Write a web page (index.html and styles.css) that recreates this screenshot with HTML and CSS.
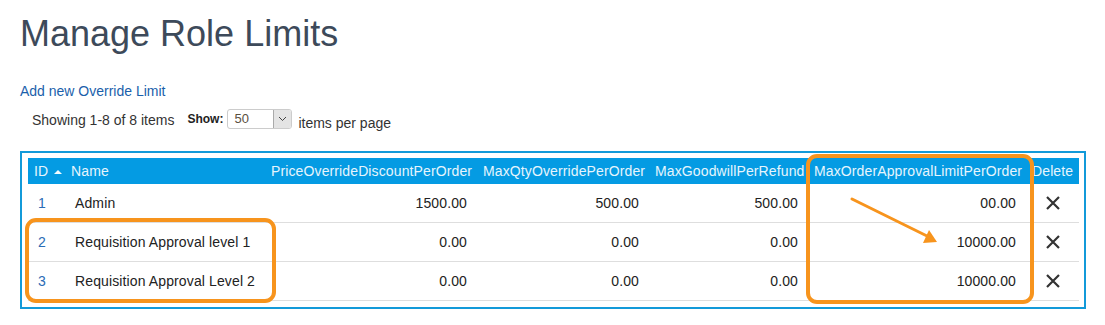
FILE: index.html
```html
<!DOCTYPE html>
<html lang="en">
<head>
  <meta charset="UTF-8" />
  <title>Manage Role Limits</title>
  <link rel="stylesheet" href="styles.css">
</head>
<body>
  <div class="page">
    <h1>Manage Role Limits</h1>

    <a class="add-link" href="#">Add new Override Limit</a>

    <div class="pager">
      <span class="pager-count">Showing 1-8 of 8 items</span>
      <span class="pager-label">Show:</span>
      <span class="pager-select">
        <span class="pager-value">50</span>
        <span class="pager-btn">
          <svg width="9" height="6" viewBox="0 0 9 6"><path d="M1 1 L4.5 4.5 L8 1" fill="none" stroke="#444" stroke-width="1"/></svg>
        </span>
      </span>
      <span class="pager-text">items per page</span>
    </div>

    <div class="grid-box">
      <table class="grid">
        <colgroup>
          <col class="c-id">
          <col class="c-name">
          <col class="c-price">
          <col class="c-qty">
          <col class="c-goodwill">
          <col class="c-approval">
          <col class="c-delete">
        </colgroup>
        <thead>
          <tr>
            <th>ID <span class="sort-up"></span></th>
            <th>Name</th>
            <th class="num">PriceOverrideDiscountPerOrder</th>
            <th class="num">MaxQtyOverridePerOrder</th>
            <th class="num">MaxGoodwillPerRefund</th>
            <th class="num">MaxOrderApprovalLimitPerOrder</th>
            <th>Delete</th>
          </tr>
        </thead>
        <tbody>
          <tr>
            <td><a href="#">1</a></td>
            <td>Admin</td>
            <td class="num">1500.00</td>
            <td class="num">500.00</td>
            <td class="num">500.00</td>
            <td class="num">00.00</td>
            <td class="del"><svg width="16" height="16" viewBox="0 0 16 16"><path d="M2 2 L14 14 M14 2 L2 14" stroke="#333" stroke-width="2.2"/></svg></td>
          </tr>
          <tr>
            <td><a href="#">2</a></td>
            <td>Requisition Approval level 1</td>
            <td class="num">0.00</td>
            <td class="num">0.00</td>
            <td class="num">0.00</td>
            <td class="num">10000.00</td>
            <td class="del"><svg width="16" height="16" viewBox="0 0 16 16"><path d="M2 2 L14 14 M14 2 L2 14" stroke="#333" stroke-width="2.2"/></svg></td>
          </tr>
          <tr>
            <td><a href="#">3</a></td>
            <td>Requisition Approval Level 2</td>
            <td class="num">0.00</td>
            <td class="num">0.00</td>
            <td class="num">0.00</td>
            <td class="num">10000.00</td>
            <td class="del"><svg width="16" height="16" viewBox="0 0 16 16"><path d="M2 2 L14 14 M14 2 L2 14" stroke="#333" stroke-width="2.2"/></svg></td>
          </tr>
        </tbody>
      </table>
    </div>
  </div>

  <!-- annotation marks drawn over the screenshot -->
  <svg class="marks" width="1105" height="325" viewBox="0 0 1105 325">
    <rect x="27" y="220" width="247" height="81" rx="9" fill="none" stroke="#f7941d" stroke-width="4"/>
    <rect x="808" y="156" width="224" height="146" rx="9" fill="none" stroke="#f7941d" stroke-width="4"/>
    <line x1="852" y1="199" x2="927" y2="236" stroke="#f7941d" stroke-width="3" stroke-linecap="round"/>
    <polygon points="937,242 923,243 929,230" fill="#f7941d"/>
  </svg>
</body>
</html>
```

FILE: styles.css
```css
body {
  margin: 0;
  font-family: "Liberation Sans", Arial, sans-serif;
  color: #333;
  background: #fff;
  position: relative;
}
.page {
  padding: 14px 19px 0 20px;
}
h1 {
  margin: 0;
  font-size: 36px;
  line-height: 40px;
  font-weight: normal;
  color: #3d4a5a;
}
.add-link {
  display: block;
  margin-top: 27px;
  font-size: 14px;
  line-height: 20px;
  color: #1b5fab;
  text-decoration: none;
}
.pager {
  display: flex;
  align-items: flex-start;
  height: 20px;
  margin-top: 8px;
  padding-left: 12px;
  font-size: 14px;
}
.pager-count {
  margin-top: 3px;
  line-height: 16px;
}
.pager-label {
  margin: 3px 0 0 13px;
  font-size: 12px;
  line-height: 14px;
  font-weight: bold;
  color: #222;
}
.pager-select {
  display: flex;
  width: 65px;
  height: 20px;
  margin-left: 4px;
  border: 1px solid #ccc;
  border-radius: 3px;
  box-sizing: border-box;
}
.pager-value {
  flex: 1;
  padding-left: 6px;
  font-size: 13px;
  line-height: 18px;
  color: #5a5040;
}
.pager-btn {
  width: 17px;
  display: flex;
  align-items: center;
  justify-content: center;
  background: #e4e4e4;
  border-left: 1px solid #aaa;
  border-radius: 0 2px 2px 0;
}
.pager-text {
  margin: 6px 0 0 6px;
  line-height: 16px;
}
.grid-box {
  margin-top: 22px;
  border: 2px solid #139ad9;
  padding: 5px 5px 6px 6px;
}
.grid {
  width: 100%;
  border-collapse: collapse;
  table-layout: fixed;
  font-size: 14px;
  letter-spacing: 0.12px;
}
.c-id { width: 37px; }
.c-name { width: 200px; }
.c-price { width: 212px; }
.c-qty { width: 172px; }
.c-goodwill { width: 159px; }
.c-approval { width: 218px; }
.c-delete { width: 53px; }
.grid th {
  height: 26px;
  padding: 0 6px;
  background: #049be3;
  color: #e6f5fd;
  font-weight: normal;
  text-align: left;
  white-space: nowrap;
}
.grid th.num {
  text-align: right;
}
.sort-up {
  display: inline-block;
  width: 0;
  height: 0;
  margin-left: 2px;
  border-left: 4px solid transparent;
  border-right: 4px solid transparent;
  border-bottom: 4px solid #f2fbff;
  vertical-align: 2px;
}
.grid td {
  height: 38px;
  padding: 0 10px;
  border-bottom: 1px solid #dedede;
  color: #222;
  white-space: nowrap;
}
.grid td.num {
  text-align: right;
}
.grid td a {
  color: #2b6cb5;
  text-decoration: none;
}
.grid td.del {
  padding: 0;
  text-align: center;
}
.grid td.del svg {
  display: block;
  margin: 0 auto;
}
.marks {
  position: absolute;
  top: 0;
  left: 0;
  pointer-events: none;
}
```
